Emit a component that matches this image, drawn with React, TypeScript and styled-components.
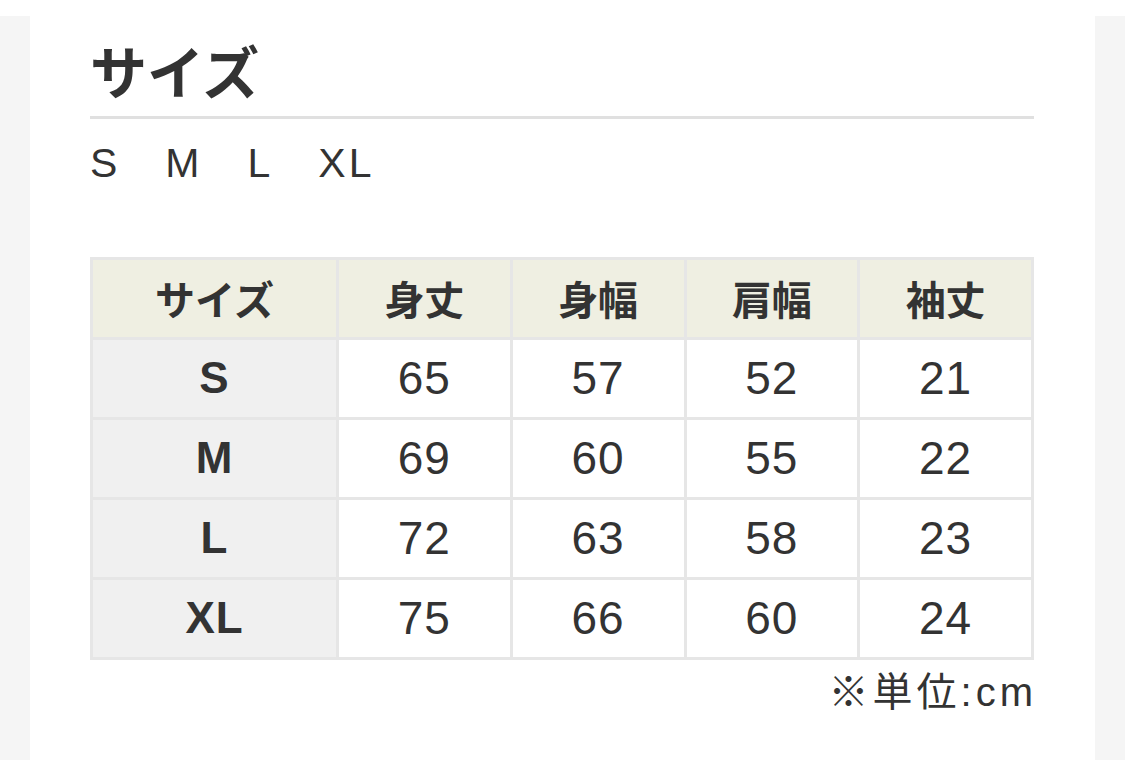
import React from "react";
import styled, { createGlobalStyle } from "styled-components";

interface SizeRow {
  size: string;
  length: number;
  width: number;
  shoulder: number;
  sleeve: number;
}

const rows: SizeRow[] = [
  { size: "S", length: 65, width: 57, shoulder: 52, sleeve: 21 },
  { size: "M", length: 69, width: 60, shoulder: 55, sleeve: 22 },
  { size: "L", length: 72, width: 63, shoulder: 58, sleeve: 23 },
  { size: "XL", length: 75, width: 66, shoulder: 60, sleeve: 24 },
];

const headers = ["サイズ", "身丈", "身幅", "肩幅", "袖丈"];
const sizes = ["S", "M", "L", "XL"];

const GlobalStyle = createGlobalStyle`
  html, body {
    margin: 0;
    padding: 0;
    background: #fff;
  }
  body {
    font-family: "Liberation Sans", "Noto Sans CJK JP", sans-serif;
    color: #333;
  }
`;

const Page = styled.div`
  margin-top: 16px;
  background: #f5f5f5;
  padding: 0 30px;
  min-height: 744px;
  display: flex;
`;

const Panel = styled.section`
  flex: 1;
  min-width: 0;
  background: #fff;
  padding: 19px 61px 40px 60px;
`;

const Heading = styled.h2`
  margin: 0;
  font-family: "Noto Sans CJK JP", sans-serif;
  font-size: 57px;
  font-weight: 700;
  line-height: 1.2;
  color: #333;
  padding-bottom: 13px;
  border-bottom: 3px solid #e0e0e0;
`;

const SizeList = styled.p`
  margin: 20px 0 0;
  font-size: 41px;
  line-height: 1.2;
  letter-spacing: 3px;
  display: flex;
  gap: 45px;
`;

const Table = styled.table`
  margin-top: 68px;
  width: 100%;
  table-layout: fixed;
  border-collapse: collapse;
  border: 3px solid #e6e6e6;
`;

const LabelCol = styled.col`
  width: 246px;
`;

const HeadCell = styled.th`
  height: 77px;
  padding: 0;
  background: #efefe2;
  border: 3px solid #e6e6e6;
  font-family: "Noto Sans CJK JP", sans-serif;
  font-size: 40px;
  font-weight: 700;
  text-align: center;
  color: #333;
`;

const Cell = styled.td<{ $label?: boolean }>`
  height: 77px;
  padding: 0;
  background: ${(p) => (p.$label ? "#f0f0f0" : "#fff")};
  border: 3px solid #e6e6e6;
  font-size: ${(p) => (p.$label ? "44px" : "46px")};
  font-weight: ${(p) => (p.$label ? 700 : 400)};
  letter-spacing: 1px;
  text-align: center;
  color: #333;
`;

const Note = styled.p`
  margin: 8px -3px 0 0;
  text-align: right;
  font-size: 40px;
  line-height: 1.2;
  letter-spacing: 4px;
`;

const App: React.FC = () => {
  return (
    <>
      <GlobalStyle />
      <Page>
        <Panel>
          <Heading>サイズ</Heading>
          <SizeList>
            {sizes.map((s) => (
              <span key={s}>{s}</span>
            ))}
          </SizeList>
          <Table>
            <colgroup>
              <LabelCol />
              <col />
              <col />
              <col />
              <col />
            </colgroup>
            <thead>
              <tr>
                {headers.map((h) => (
                  <HeadCell key={h}>{h}</HeadCell>
                ))}
              </tr>
            </thead>
            <tbody>
              {rows.map((r) => (
                <tr key={r.size}>
                  <Cell $label>{r.size}</Cell>
                  <Cell>{r.length}</Cell>
                  <Cell>{r.width}</Cell>
                  <Cell>{r.shoulder}</Cell>
                  <Cell>{r.sleeve}</Cell>
                </tr>
              ))}
            </tbody>
          </Table>
          <Note>※単位:cm</Note>
        </Panel>
      </Page>
    </>
  );
};

export default App;
